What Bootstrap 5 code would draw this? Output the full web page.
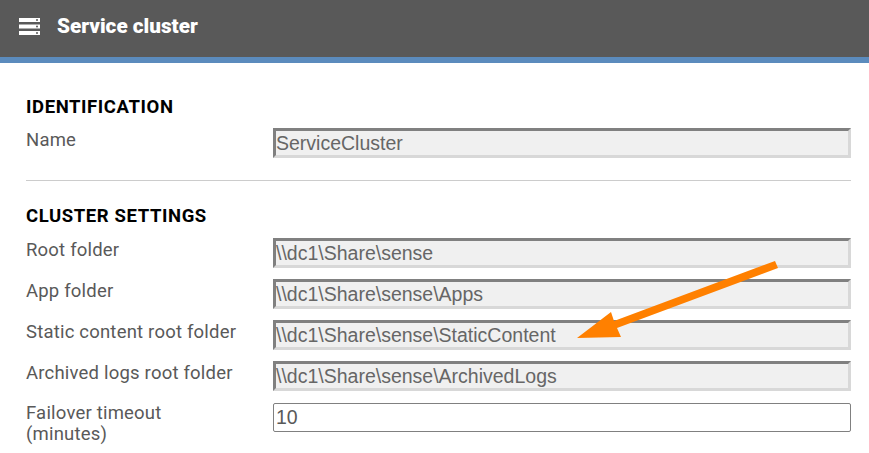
<!DOCTYPE html>
<html lang="en">
<head>
    <meta charset="UTF-8">
    <meta name="viewport" content="width=device-width, initial-scale=1.0">
    <title>Service cluster</title>
    <link rel="stylesheet" href="https://cdn.jsdelivr.net/npm/bootstrap@5.3.0/dist/css/bootstrap.min.css">
    <style>
        html, body { height: 453px; overflow: hidden; }
        body { font-family: "Roboto", "Liberation Sans", sans-serif; background: #fff; position: relative; }
        .page-head { height: 63px; background: #595959; border-bottom: 6px solid #5b8bbd; padding: 0 0 5px 19px; gap: 17px; }
        .page-head h1 { font-size: 20.7px; font-weight: 900; color: #fff; margin: 0; line-height: 1; }
        .settings { padding: 34px 18px 0 26px; }
        .section-title { font-size: 18.5px; font-weight: 700; color: #000; line-height: 20px; margin: 0 0 12px; letter-spacing: .6px; }
        .section-title.first-title { margin-bottom: 11px; }
        .field-row { display: flex; height: 41px; }
        .field-row.last-row { margin-top: 1px; }
        .field-label { width: 247px; flex: none; font-size: 18.5px; line-height: 21px; color: #595959; padding-top: 2px; letter-spacing: .2px; }
        .last-row .field-label { padding-top: 0; }
        .field-value { flex: 1; height: 30px; font-family: "Liberation Sans", sans-serif; font-size: 19.5px; line-height: 24px; color: #666; background: #f0f0f0; border-style: solid; border-width: 3px; border-color: #808080 #d8d8d8 #d8d8d8 #808080; padding: 0; border-radius: 0; white-space: nowrap; }
        .field-value.editable { background: #fff; color: #595959; border: 1px solid #808080; border-radius: 2px; height: 29px; line-height: 27px; padding-left: 2px; }
        .divider { border: 0; border-top: 1px solid #ccc; opacity: 1; margin: 11px 0 25px; }
        .arrow-overlay { position: absolute; left: 0; top: 0; pointer-events: none; }
    </style>
</head>
<body>
    <header class="page-head d-flex align-items-center">
        <svg width="21" height="17" viewBox="0 0 21 17">
            <rect x="0" y="0" width="21" height="4" fill="#fff"/>
            <rect x="0" y="6.5" width="21" height="4" fill="#fff"/>
            <rect x="0" y="13" width="21" height="4" fill="#fff"/>
            <circle cx="18" cy="2" r="1" fill="#595959"/>
            <circle cx="18" cy="8.5" r="1" fill="#595959"/>
            <circle cx="18" cy="15" r="1" fill="#595959"/>
        </svg>
        <h1>Service cluster</h1>
    </header>

    <main class="settings">
        <h2 class="section-title first-title">IDENTIFICATION</h2>
        <div class="field-row">
            <div class="field-label">Name</div>
            <div class="field-value">ServiceCluster</div>
        </div>
        <hr class="divider">
        <h2 class="section-title">CLUSTER SETTINGS</h2>
        <div class="field-row">
            <div class="field-label">Root folder</div>
            <div class="field-value">\\dc1\Share\sense</div>
        </div>
        <div class="field-row">
            <div class="field-label">App folder</div>
            <div class="field-value">\\dc1\Share\sense\Apps</div>
        </div>
        <div class="field-row">
            <div class="field-label">Static content root folder</div>
            <div class="field-value">\\dc1\Share\sense\StaticContent</div>
        </div>
        <div class="field-row">
            <div class="field-label">Archived logs root folder</div>
            <div class="field-value">\\dc1\Share\sense\ArchivedLogs</div>
        </div>
        <div class="field-row last-row">
            <div class="field-label">Failover timeout<br>(minutes)</div>
            <div class="field-value editable">10</div>
        </div>
    </main>

    <svg class="arrow-overlay" width="869" height="453" viewBox="0 0 869 453">
        <polygon points="775,261 778,268 617,328 621,337 577,338 611,312 614,321" fill="#ff8000"/>
    </svg>

    <script src="https://cdn.jsdelivr.net/npm/bootstrap@5.3.0/dist/js/bootstrap.bundle.min.js"></script>
</body>
</html>
